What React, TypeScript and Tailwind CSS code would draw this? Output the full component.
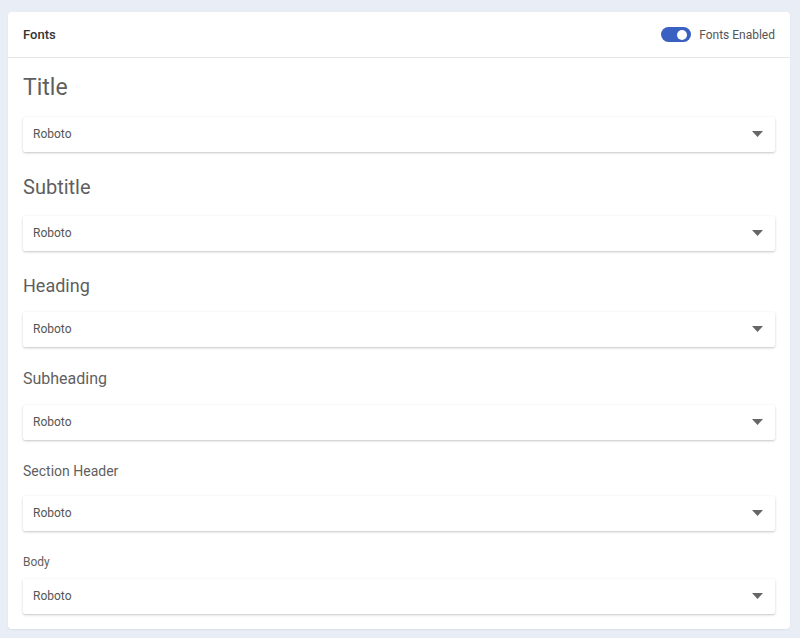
import React from "react";

const sections: { label: string; cls: string }[] = [
  { label: "Title", cls: "mt-[16px] mb-[15px] text-[23px] leading-[28px]" },
  { label: "Subtitle", cls: "mt-[22px] mb-[16px] text-[20px] leading-[26px]" },
  { label: "Heading", cls: "mt-[23px] mb-[14px] text-[18px] leading-[24px]" },
  { label: "Subheading", cls: "mt-[21px] mb-[15px] text-[16px] leading-[22px]" },
  { label: "Section Header", cls: "mt-[21px] mb-[15px] text-[14px] leading-[20px]" },
  { label: "Body", cls: "mt-[23px] mb-[9px] text-[12px] leading-[16px]" },
];

function Select() {
  return (
    <div className="flex h-[35px] items-center justify-between rounded-[2px] bg-white pb-[1px] pl-[10px] pr-[12px] shadow-[0_1px_3px_rgba(0,0,0,0.18),0_1px_1px_rgba(0,0,0,0.06)]">
      <span className="text-[12px] text-[#555]">Roboto</span>
      <svg width="11" height="6" viewBox="0 0 11 6">
        <path d="M0 0 L11 0 L5.5 6 Z" fill="#666" />
      </svg>
    </div>
  );
}

export default function App() {
  return (
    <div
      className="min-h-[638px] bg-[#e9edf5] pt-[12px] pl-[8px] pr-[10px] pb-[9px]"
      style={{ fontFamily: "Roboto, 'Noto Sans', sans-serif" }}
    >
      <div className="rounded-[4px] bg-white shadow-[0_1px_2px_rgba(0,0,0,0.06)]">
        <div className="flex h-[46px] items-center justify-between border-b border-[#e6e6e6] pl-[15px] pr-[15px]">
          <span className="text-[13px] font-medium text-[#333]">Fonts</span>
          <div className="flex items-center gap-[8px]">
            <div className="relative h-[15px] w-[30px] rounded-full bg-[#3a60c2]">
              <div className="absolute right-[4px] top-[2.5px] h-[10px] w-[10px] rounded-full bg-white" />
            </div>
            <span className="text-[12px] text-[#555]">Fonts Enabled</span>
          </div>
        </div>
        <div className="px-[15px] pb-[15px]">
          {sections.map((s) => (
            <div key={s.label}>
              <div className={`${s.cls} text-[#5f5f5f]`}>{s.label}</div>
              <Select />
            </div>
          ))}
        </div>
      </div>
    </div>
  );
}
